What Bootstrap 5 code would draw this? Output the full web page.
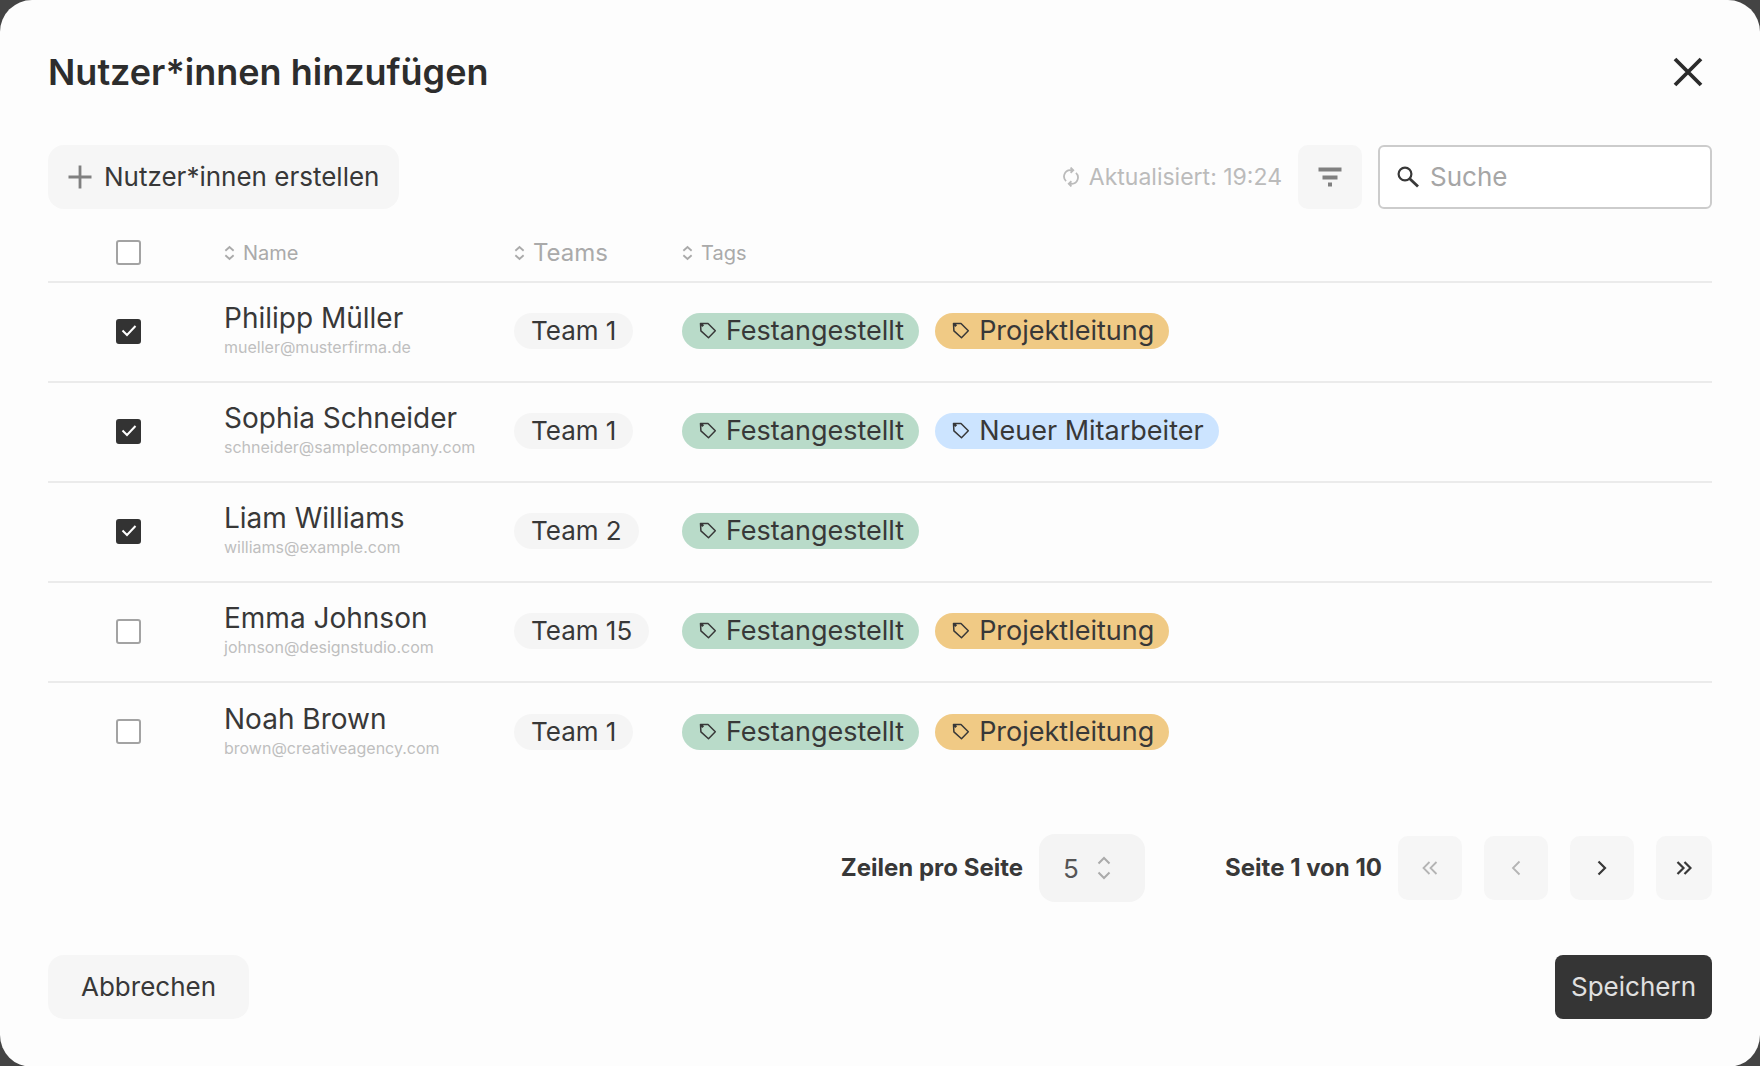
<!DOCTYPE html>
<html lang="de">
<head>
<meta charset="utf-8">
<meta name="viewport" content="width=device-width, initial-scale=1">
<title>Nutzer*innen hinzufügen</title>
<link href="https://cdn.jsdelivr.net/npm/bootstrap@5.3.0/dist/css/bootstrap.min.css" rel="stylesheet">
<style>
  :root { --ink: #383838; --muted: #aaa; --soft: #f6f6f6; --line: #ebebeb; }
  body { background: #444; color: var(--ink); font-family: Inter, "Liberation Sans", sans-serif; font-size: 26px; line-height: 32px; }
  svg { display: block; flex: none; fill: none; stroke: currentColor; }
  .ico-grey { color: #808080; }
  .dialog-panel { min-height: 100vh; background: #fdfdfd; border-radius: 32px; padding: 48px; }
  .dialog-title { font-size: 36px; line-height: 48px; font-weight: 600; color: #2d2d2d; }
  .close-btn { color: #2b2b2b; line-height: 1; }
  .toolbar { margin-top: 49px; }
  .soft-btn { --bs-btn-bg: var(--soft); --bs-btn-color: var(--ink); --bs-btn-hover-bg: #ececec; --bs-btn-active-bg: #e4e4e4; --bs-btn-disabled-bg: var(--soft); --bs-btn-disabled-color: #b4b4b4; --bs-btn-disabled-opacity: 1; --bs-btn-border-width: 0; --bs-btn-font-size: 26px; --bs-btn-line-height: 32px; --bs-btn-border-radius: 16px; --bs-btn-padding-y: 16px; min-height: 64px; }
  .create-btn { --bs-btn-padding-x: 20px; }
  .cancel-btn { --bs-btn-padding-x: 33px; }
  .icon-btn { --bs-btn-border-radius: 10px; --bs-btn-padding-x: 0; width: 64px; }
  .updated { color: #bbb; font-size: 23px; gap: 9px; }
  .search-box { width: 334px; height: 64px; border: 2px solid #ccc; border-radius: 6px; background: #fff; padding: 0 16px; }
  .search-box .form-control { font-size: 26px; line-height: 32px; color: var(--ink); margin-left: 10px; }
  .search-box .form-control::placeholder { color: #a6a6a6; }
  .user-table { --bs-table-bg: transparent; --bs-table-color: var(--ink); table-layout: fixed; margin-top: 15px; border-color: var(--line); }
  .user-table > :not(caption) > * > * { padding: 0; border-bottom-width: 2px; vertical-align: middle; }
  .user-table thead th { height: 58px; font-weight: 400; color: var(--muted); }
  .user-table tbody tr { height: 100px; }
  .user-table > tbody > tr > td { padding-bottom: 2px; }
  .user-table tbody tr:last-child > * { border-bottom-width: 0; }
  .col-pick { width: 176px; } .col-name { width: 290px; } .col-team { width: 168px; }
  .user-table .pick { padding-left: 68px; }
  .form-check-input.tick { display: block; width: 25px; height: 25px; margin: 0; border: 2px solid #a3a3a3; border-radius: 3px; background-color: #fff; }
  .form-check-input.tick:checked { border-color: #333; background-color: #333; background-size: 20px;
    background-image: url("data:image/svg+xml,%3Csvg xmlns='http://www.w3.org/2000/svg' viewBox='0 0 20 20' fill='none' stroke='%23fff' stroke-width='2'%3E%3Cpath d='M3.500 9.500l4.500 4.500 8.500-9'/%3E%3C/svg%3E"); }
  .sort-btn { color: inherit; font-size: 20px; line-height: 28px; }
  .sort-btn.big { font-size: 24px; }
  .person { font-size: 28px; }
  .mail { font-size: 16px; line-height: 26px; color: #bfbfbf; }
  .pill { height: 36px; padding: 0 16px; border-radius: 18px; white-space: nowrap; }
  .pill-tag { font-size: 27px; padding: 0 15px 0 17px; gap: 9px; }
  .pill-team { background: #f5f5f5; padding: 0 17px; } .pill-green { background: #b9dbc9; } .pill-amber { background: #f0ca85; } .pill-blue { background: #cce4ff; }
  .pager { margin-top: 52px; font-size: 24px; font-weight: 700; }
  .rows-select { width: 106px; height: 68px; border: 0; border-radius: 16px; background-color: #f4f4f4; padding: 0 24px; font-size: 26px; color: #555;
    background-image: url("data:image/svg+xml,%3Csvg xmlns='http://www.w3.org/2000/svg' viewBox='0 0 14 24' fill='none' stroke='%23aaa' stroke-width='2'%3E%3Cpath d='M1.500 7.500 7 2l5.500 5.500M1.500 16.500 7 22l5.500-5.500'/%3E%3C/svg%3E"); background-size: 14px 24px; background-position: right 34px center; }
  .page-status { margin-left: 80px; }
  .page-btns { gap: 22px; }
  .page-btns .icon-btn:last-child { width: 56px; }
  .dialog-foot { margin-top: 53px; }
  .save-btn { --bs-btn-bg: #353535; --bs-btn-color: #e0e0e0; --bs-btn-hover-bg: #222; --bs-btn-hover-color: #fff; --bs-btn-border-radius: 8px; }
</style>
<script src="https://cdn.jsdelivr.net/npm/bootstrap@5.3.0/dist/js/bootstrap.bundle.min.js"></script>
</head>
<body>
<svg class="d-none" aria-hidden="true">
  <symbol id="i-sort" viewBox="0 0 12 18"><path d="M1.500 6.500 6 2.500 10.500 6.500M1.500 11.500 6 15.500 10.500 11.500" stroke-width="2"/></symbol>
  <symbol id="i-tag" viewBox="0 0 18 18"><path d="M1.500 1.500h7.500l7.300 7.300-6.800 6.900L1.900 8.900z" stroke-width="1.500" stroke-linejoin="round"/><path d="M2 2l2.200 2.200" stroke-width="2.600"/></symbol>
</svg>

<main class="dialog-panel d-flex flex-column">
  <header class="d-flex justify-content-between align-items-center">
    <h1 class="dialog-title m-0">Nutzer*innen hinzufügen</h1>
    <button type="button" class="btn border-0 close-btn p-0 px-2" aria-label="Schließen">
      <svg width="32" height="32" viewBox="0 0 32 32" stroke-width="3.800"><path d="M3 3l26 26M29 3 3 29"/></svg>
    </button>
  </header>

  <div class="toolbar d-flex align-items-center gap-3">
    <button type="button" class="btn soft-btn create-btn d-flex align-items-center me-auto">
      <svg class="ico-grey me-2 pe-1" width="28" height="24" viewBox="0 0 24 24" stroke-width="2.800"><path d="M12 .5v23M.5 12h23"/></svg>
      Nutzer*innen erstellen
    </button>
    <div class="updated d-flex align-items-center">
      <svg width="18" height="20" viewBox="0 0 20 22" stroke-width="2"><path d="M12.500 3.400H9A7 7 0 0 0 4.500 15.500M9.500 .5l3 2.900-3 2.900M7.500 18.600H11A7 7 0 0 0 15.500 6.500M10.500 21.500l-3-2.900 3-2.900"/></svg>
      Aktualisiert: 19:24
    </div>
    <button type="button" class="btn soft-btn icon-btn d-flex align-items-center justify-content-center" aria-label="Filter">
      <svg class="ico-grey" width="24" height="20" viewBox="0 0 24 20" stroke-width="4"><path d="M.5 2.500h23M4.500 10.500h15M10 17.500h4"/></svg>
    </button>
    <div class="search-box d-flex align-items-center">
      <svg width="24" height="24" viewBox="0 0 24 24" stroke-width="2.200"><circle cx="9" cy="9" r="6.400"/><path d="m13.500 13.500 8.500 8" stroke-width="2.800"/></svg>
      <input type="search" class="form-control border-0 bg-transparent shadow-none p-0" placeholder="Suche" aria-label="Suche">
    </div>
  </div>

  <table class="table user-table mb-0">
    <colgroup><col class="col-pick"><col class="col-name"><col class="col-team"><col></colgroup>
    <thead>
      <tr>
        <th class="pick" scope="col"><input class="form-check-input tick" type="checkbox" aria-label="Alle auswählen"></th>
        <th scope="col"><button type="button" class="btn border-0 p-0 sort-btn d-flex align-items-center gap-2"><svg width="11" height="18"><use href="#i-sort"/></svg>Name</button></th>
        <th scope="col"><button type="button" class="btn border-0 p-0 sort-btn big d-flex align-items-center gap-2"><svg width="11" height="18"><use href="#i-sort"/></svg>Teams</button></th>
        <th scope="col"><button type="button" class="btn border-0 p-0 sort-btn d-flex align-items-center gap-2"><svg width="11" height="18"><use href="#i-sort"/></svg>Tags</button></th>
      </tr>
    </thead>
    <tbody>
      <tr>
        <td class="pick"><input class="form-check-input tick" type="checkbox" checked aria-label="Philipp Müller"></td>
        <td><div class="person">Philipp Müller</div><div class="mail">mueller@musterfirma.de</div></td>
        <td><span class="pill pill-team d-inline-flex align-items-center">Team 1</span></td>
        <td><div class="d-flex gap-3"><span class="pill pill-tag pill-green d-flex align-items-center"><svg width="18" height="18"><use href="#i-tag"/></svg>Festangestellt</span><span class="pill pill-tag pill-amber d-flex align-items-center"><svg width="18" height="18"><use href="#i-tag"/></svg>Projektleitung</span></div></td>
      </tr>
      <tr>
        <td class="pick"><input class="form-check-input tick" type="checkbox" checked aria-label="Sophia Schneider"></td>
        <td><div class="person">Sophia Schneider</div><div class="mail">schneider@samplecompany.com</div></td>
        <td><span class="pill pill-team d-inline-flex align-items-center">Team 1</span></td>
        <td><div class="d-flex gap-3"><span class="pill pill-tag pill-green d-flex align-items-center"><svg width="18" height="18"><use href="#i-tag"/></svg>Festangestellt</span><span class="pill pill-tag pill-blue d-flex align-items-center"><svg width="18" height="18"><use href="#i-tag"/></svg>Neuer Mitarbeiter</span></div></td>
      </tr>
      <tr>
        <td class="pick"><input class="form-check-input tick" type="checkbox" checked aria-label="Liam Williams"></td>
        <td><div class="person">Liam Williams</div><div class="mail">williams@example.com</div></td>
        <td><span class="pill pill-team d-inline-flex align-items-center">Team 2</span></td>
        <td><div class="d-flex gap-3"><span class="pill pill-tag pill-green d-flex align-items-center"><svg width="18" height="18"><use href="#i-tag"/></svg>Festangestellt</span></div></td>
      </tr>
      <tr>
        <td class="pick"><input class="form-check-input tick" type="checkbox" aria-label="Emma Johnson"></td>
        <td><div class="person">Emma Johnson</div><div class="mail">johnson@designstudio.com</div></td>
        <td><span class="pill pill-team d-inline-flex align-items-center">Team 15</span></td>
        <td><div class="d-flex gap-3"><span class="pill pill-tag pill-green d-flex align-items-center"><svg width="18" height="18"><use href="#i-tag"/></svg>Festangestellt</span><span class="pill pill-tag pill-amber d-flex align-items-center"><svg width="18" height="18"><use href="#i-tag"/></svg>Projektleitung</span></div></td>
      </tr>
      <tr>
        <td class="pick"><input class="form-check-input tick" type="checkbox" aria-label="Noah Brown"></td>
        <td><div class="person">Noah Brown</div><div class="mail">brown@creativeagency.com</div></td>
        <td><span class="pill pill-team d-inline-flex align-items-center">Team 1</span></td>
        <td><div class="d-flex gap-3"><span class="pill pill-tag pill-green d-flex align-items-center"><svg width="18" height="18"><use href="#i-tag"/></svg>Festangestellt</span><span class="pill pill-tag pill-amber d-flex align-items-center"><svg width="18" height="18"><use href="#i-tag"/></svg>Projektleitung</span></div></td>
      </tr>
    </tbody>
  </table>

  <nav class="pager d-flex justify-content-end align-items-center" aria-label="Seiten">
    <label for="rows" class="me-3">Zeilen pro Seite</label>
    <select id="rows" class="form-select rows-select"><option>5</option><option>10</option><option>25</option></select>
    <span class="page-status me-3">Seite 1 von 10</span>
    <div class="page-btns d-flex">
      <button type="button" class="btn soft-btn icon-btn d-flex align-items-center justify-content-center" disabled aria-label="Erste Seite"><svg width="16" height="14" viewBox="0 0 16 14" stroke-width="1.800"><path d="M7.500 1 1.500 7l6 6M14.500 1l-6 6 6 6"/></svg></button>
      <button type="button" class="btn soft-btn icon-btn d-flex align-items-center justify-content-center" disabled aria-label="Vorige Seite"><svg width="10" height="16" viewBox="0 0 10 16" stroke-width="1.800"><path d="M8.500 1.500 2 8l6.500 6.500"/></svg></button>
      <button type="button" class="btn soft-btn icon-btn d-flex align-items-center justify-content-center" aria-label="Nächste Seite"><svg width="10" height="16" viewBox="0 0 10 16" stroke-width="2.200"><path d="M1.500 1.500 8 8l-6.500 6.500"/></svg></button>
      <button type="button" class="btn soft-btn icon-btn d-flex align-items-center justify-content-center" aria-label="Letzte Seite"><svg width="16" height="14" viewBox="0 0 16 14" stroke-width="2.200"><path d="m1.500 1 6 6-6 6M8.500 1l6 6-6 6"/></svg></button>
    </div>
  </nav>

  <footer class="dialog-foot d-flex justify-content-between">
    <button type="button" class="btn soft-btn cancel-btn">Abbrechen</button>
    <button type="button" class="btn soft-btn save-btn px-3">Speichern</button>
  </footer>
</main>
</body>
</html>
